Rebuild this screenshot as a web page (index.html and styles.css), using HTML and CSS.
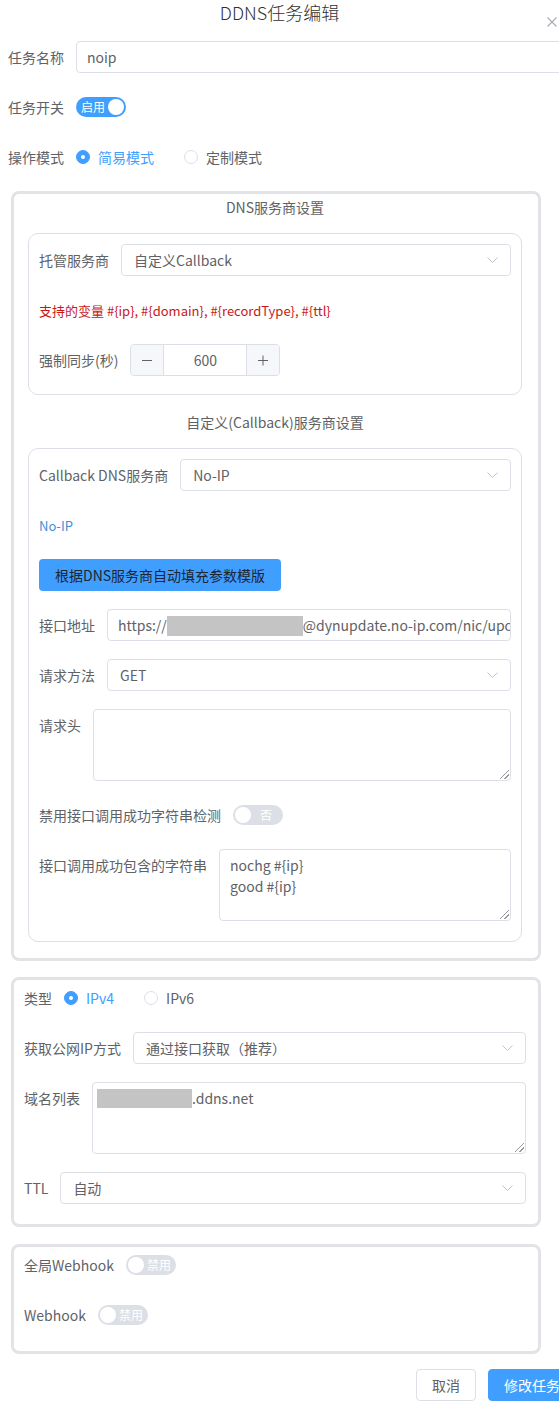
FILE: index.html
```html
<!DOCTYPE html>
<html lang="zh-CN">
<head>
  <meta charset="UTF-8" />
  <meta name="viewport" content="width=device-width, initial-scale=1.0" />
  <title>DDNS任务编辑</title>
  <link rel="stylesheet" href="styles.css">
</head>
<body>
  <div class="dialog">
    <header class="dialog-header">
      <span></span>
      <h2 class="dialog-title">DDNS任务编辑</h2>
      <button class="dialog-close" type="button" aria-label="关闭">
        <svg width="10" height="10" viewBox="0 0 10 10"><path d="M0.5 0.5L9.5 9.5M9.5 0.5L0.5 9.5" stroke="#a8abb2" stroke-width="1.1" fill="none"/></svg>
      </button>
    </header>

    <form class="task-form">
      <div class="form-item">
        <label class="item-label">任务名称</label>
        <div class="item-content"><div class="text-input">noip</div></div>
      </div>
      <div class="form-item">
        <label class="item-label">任务开关</label>
        <div class="item-content">
          <span class="switch is-on"><span class="switch-text">启用</span><span class="switch-knob"></span></span>
        </div>
      </div>
      <div class="form-item">
        <label class="item-label">操作模式</label>
        <div class="item-content">
          <label class="radio is-checked"><span class="radio-dot"></span><span class="radio-label">简易模式</span></label>
          <label class="radio"><span class="radio-dot"></span><span class="radio-label">定制模式</span></label>
        </div>
      </div>

      <!-- DNS服务商 -->
      <section class="group group-dns">
        <div class="group-title first">DNS服务商设置</div>
        <div class="sub-box">
          <div class="form-item">
            <label class="item-label">托管服务商</label>
            <div class="item-content">
              <div class="select"><span class="select-value">自定义Callback</span><svg class="arrow" width="11" height="6" viewBox="0 0 11 6"><path d="M0.5 0.5L5.5 5.5L10.5 0.5" stroke="#c0c4cc" fill="none"/></svg></div>
            </div>
          </div>
          <div class="form-item">
            <div class="item-content"><span class="var-tip">支持的变量 #{ip}, #{domain}, #{recordType}, #{ttl}</span></div>
          </div>
          <div class="form-item">
            <label class="item-label">强制同步(秒)</label>
            <div class="item-content">
              <div class="input-number">
                <span class="num-btn num-minus"><svg width="12" height="12" viewBox="0 0 12 12"><path d="M1 6.5H11" stroke="#606266" fill="none"/></svg></span>
                <span class="num-value">600</span>
                <span class="num-btn num-plus"><svg width="12" height="12" viewBox="0 0 12 12"><path d="M1 6.5H11M6 1.5V11.5" stroke="#606266" fill="none"/></svg></span>
              </div>
            </div>
          </div>
        </div>

        <div class="group-title">自定义(Callback)服务商设置</div>
        <div class="sub-box sub-callback">
          <div class="form-item">
            <label class="item-label">Callback DNS服务商</label>
            <div class="item-content">
              <div class="select"><span class="select-value">No-IP</span><svg class="arrow" width="11" height="6" viewBox="0 0 11 6"><path d="M0.5 0.5L5.5 5.5L10.5 0.5" stroke="#c0c4cc" fill="none"/></svg></div>
            </div>
          </div>
          <div class="form-item">
            <div class="item-content"><a class="provider-link">No-IP</a></div>
          </div>
          <div class="form-item">
            <div class="item-content"><button class="fill-btn" type="button">根据DNS服务商自动填充参数模版</button></div>
          </div>
          <div class="form-item">
            <label class="item-label">接口地址</label>
            <div class="item-content">
              <div class="text-input url-input">https://<span class="redact redact-url"></span>@dynupdate.no-ip.com/nic/update?hostname=#{domain}&amp;myip=#{ip}</div>
            </div>
          </div>
          <div class="form-item">
            <label class="item-label">请求方法</label>
            <div class="item-content">
              <div class="select"><span class="select-value">GET</span><svg class="arrow" width="11" height="6" viewBox="0 0 11 6"><path d="M0.5 0.5L5.5 5.5L10.5 0.5" stroke="#c0c4cc" fill="none"/></svg></div>
            </div>
          </div>
          <div class="form-item">
            <label class="item-label">请求头</label>
            <div class="item-content"><div class="textarea"></div></div>
          </div>
          <div class="form-item">
            <label class="item-label">禁用接口调用成功字符串检测</label>
            <div class="item-content">
              <span class="switch"><span class="switch-knob"></span><span class="switch-text">否</span></span>
            </div>
          </div>
          <div class="form-item">
            <label class="item-label">接口调用成功包含的字符串</label>
            <div class="item-content"><div class="textarea">nochg #{ip}<br>good #{ip}</div></div>
          </div>
        </div>
      </section>

      <!-- IP / 域名 -->
      <section class="group group-plain">
        <div class="form-item">
          <label class="item-label">类型</label>
          <div class="item-content">
            <label class="radio is-checked"><span class="radio-dot"></span><span class="radio-label">IPv4</span></label>
            <label class="radio"><span class="radio-dot"></span><span class="radio-label">IPv6</span></label>
          </div>
        </div>
        <div class="form-item">
          <label class="item-label">获取公网IP方式</label>
          <div class="item-content">
            <div class="select"><span class="select-value">通过接口获取（推荐）</span><svg class="arrow" width="11" height="6" viewBox="0 0 11 6"><path d="M0.5 0.5L5.5 5.5L10.5 0.5" stroke="#c0c4cc" fill="none"/></svg></div>
          </div>
        </div>
        <div class="form-item">
          <label class="item-label">域名列表</label>
          <div class="item-content"><div class="textarea domain-list"><span class="redact redact-domain"></span>.ddns.net</div></div>
        </div>
        <div class="form-item">
          <label class="item-label">TTL</label>
          <div class="item-content">
            <div class="select"><span class="select-value">自动</span><svg class="arrow" width="11" height="6" viewBox="0 0 11 6"><path d="M0.5 0.5L5.5 5.5L10.5 0.5" stroke="#c0c4cc" fill="none"/></svg></div>
          </div>
        </div>
      </section>

      <!-- Webhook -->
      <section class="group group-plain group-last">
        <div class="form-item">
          <label class="item-label">全局Webhook</label>
          <div class="item-content">
            <span class="switch"><span class="switch-knob"></span><span class="switch-text">禁用</span></span>
          </div>
        </div>
        <div class="form-item">
          <label class="item-label">Webhook</label>
          <div class="item-content">
            <span class="switch"><span class="switch-knob"></span><span class="switch-text">禁用</span></span>
          </div>
        </div>
      </section>

      <div class="dialog-footer">
        <button class="btn btn-cancel" type="button">取消</button>
        <button class="btn btn-primary" type="button">修改任务</button>
      </div>
    </form>
  </div>
</body>
</html>
```

FILE: styles.css
```css
/* Base */
body {
  margin: 0;
  background: #fff;
  font-family: "Noto Sans CJK SC", "Noto Sans", sans-serif;
  font-size: 14px;
  color: #606266;
}

.dialog {
  width: 559px;
  overflow: hidden;
}

/* Header */
.dialog-header {
  display: grid;
  grid-template-columns: 1fr auto 1fr;
  height: 41px;
}

.dialog-title {
  margin: 0;
  font-size: 18px;
  font-weight: 300;
  line-height: 24px;
  color: #303133;
}

.dialog-close {
  justify-self: end;
  align-self: start;
  margin: 17px 2px 0 0;
  padding: 0;
  width: 10px;
  height: 10px;
  border: none;
  background: none;
  line-height: 0;
}

/* Form */
.task-form {
  width: 590px;
  box-sizing: border-box;
  padding: 0 14px 0 8px;
}

.form-item {
  display: flex;
  align-items: flex-start;
  min-height: 32px;
  margin-bottom: 18px;
}

.item-label {
  flex: none;
  padding-right: 12px;
  line-height: 32px;
  white-space: nowrap;
  color: #606266;
}

.item-content {
  flex: 1;
  min-width: 0;
  min-height: 32px;
  display: flex;
  align-items: center;
}

.text-input,
.select {
  flex: 1;
  min-width: 0;
  height: 32px;
  box-sizing: border-box;
  border: 1px solid #dcdfe6;
  border-radius: 4px;
  background: #fff;
  line-height: 30px;
  color: #606266;
}

.text-input {
  padding: 0 10px;
  white-space: nowrap;
  overflow: hidden;
}

.select {
  display: flex;
  align-items: center;
  padding: 0 12px 0 12px;
}

.select-value {
  flex: 1;
  white-space: nowrap;
}

.textarea {
  position: relative;
  flex: 1;
  height: 72px;
  box-sizing: border-box;
  border: 1px solid #dcdfe6;
  border-radius: 4px;
  padding: 5px 10px;
  line-height: 21px;
  color: #606266;
}

/* resize grip */
.textarea::after {
  content: "";
  position: absolute;
  right: 1px;
  bottom: 1px;
  width: 9px;
  height: 9px;
  background: linear-gradient(135deg, transparent 46%, #999 46%, #999 54%, transparent 54%, transparent 72%, #999 72%, #999 80%, transparent 80%);
}

.redact {
  display: inline-block;
  background: #c4c4c4;
  vertical-align: middle;
}

.redact-url {
  width: 136px;
  height: 20px;
  margin-top: -3px;
}

.domain-list {
  padding-left: 4px;
}

.redact-domain {
  width: 95px;
  height: 19px;
  margin-top: -4px;
}

/* Switch */
.switch {
  display: inline-flex;
  align-items: center;
  width: 50px;
  height: 20px;
  box-sizing: border-box;
  padding: 0 2px;
  border-radius: 10px;
  background: #dcdfe6;
}

.switch.is-on {
  background: #409eff;
}

.switch-knob {
  flex: none;
  width: 16px;
  height: 16px;
  border-radius: 50%;
  background: #fff;
}

.switch-text {
  flex: 1;
  text-align: center;
  font-size: 12px;
  line-height: 20px;
  color: #fff;
}

/* Radio */
.radio {
  display: inline-flex;
  align-items: center;
  margin-right: 30px;
}

.radio-dot {
  position: relative;
  width: 14px;
  height: 14px;
  box-sizing: border-box;
  border: 1px solid #dcdfe6;
  border-radius: 50%;
  background: #fff;
}

.radio-label {
  margin-left: 8px;
  color: #606266;
}

.radio.is-checked .radio-dot {
  border-color: #409eff;
  background: #409eff;
}

.radio.is-checked .radio-dot::after {
  content: "";
  position: absolute;
  left: 4px;
  top: 4px;
  width: 4px;
  height: 4px;
  border-radius: 50%;
  background: #fff;
}

.radio.is-checked .radio-label {
  color: #409eff;
}

/* Groups */
.group {
  width: 530px;
  box-sizing: border-box;
  margin: 0 0 17px 3px;
  border: 3px solid #e1e3e7;
  border-radius: 8px;
  background: #fff;
}

.group-dns {
  margin-top: 1px;
  margin-bottom: 16px;
  padding: 0 16px 16px 14px;
}

.group-plain {
  padding: 2px 12px 2px 10px;
}

.group-last {
  margin-bottom: 15px;
}

.group-title {
  margin: 17px 0 16px;
  text-align: center;
  line-height: 20px;
  color: #606266;
}

.group-title.first {
  margin-top: 3px;
}

.sub-box {
  border: 1px solid #dcdfe6;
  border-radius: 10px;
  padding: 10px 10px 0;
}

.sub-callback {
  padding-bottom: 2px;
}

.var-tip {
  font-size: 13px;
  color: #c81818;
}

.provider-link {
  font-size: 13px;
  color: #3d8fdc;
}

/* Input number */
.input-number {
  display: flex;
  width: 150px;
  height: 32px;
  box-sizing: border-box;
  border: 1px solid #dcdfe6;
  border-radius: 4px;
  overflow: hidden;
}

.num-btn {
  display: flex;
  align-items: center;
  justify-content: center;
  width: 32px;
  background: #f5f7fa;
}

.num-minus {
  border-right: 1px solid #dcdfe6;
}

.num-plus {
  border-left: 1px solid #dcdfe6;
}

.num-value {
  flex: 1;
  text-align: center;
  line-height: 30px;
}

/* Buttons */
.fill-btn {
  height: 32px;
  padding: 0 16px;
  border: none;
  border-radius: 4px;
  background: #409eff;
  font-family: inherit;
  font-size: 14px;
  color: #1d2530;
}

.dialog-footer {
  display: flex;
  justify-content: flex-end;
  gap: 12px;
}

.btn {
  height: 32px;
  padding: 0 15px;
  border-radius: 4px;
  font-family: inherit;
  font-size: 14px;
}

.btn-cancel {
  border: 1px solid #dcdfe6;
  background: #fff;
  color: #606266;
}

.btn-primary {
  border: 1px solid #409eff;
  background: #409eff;
  color: #fff;
}
```
